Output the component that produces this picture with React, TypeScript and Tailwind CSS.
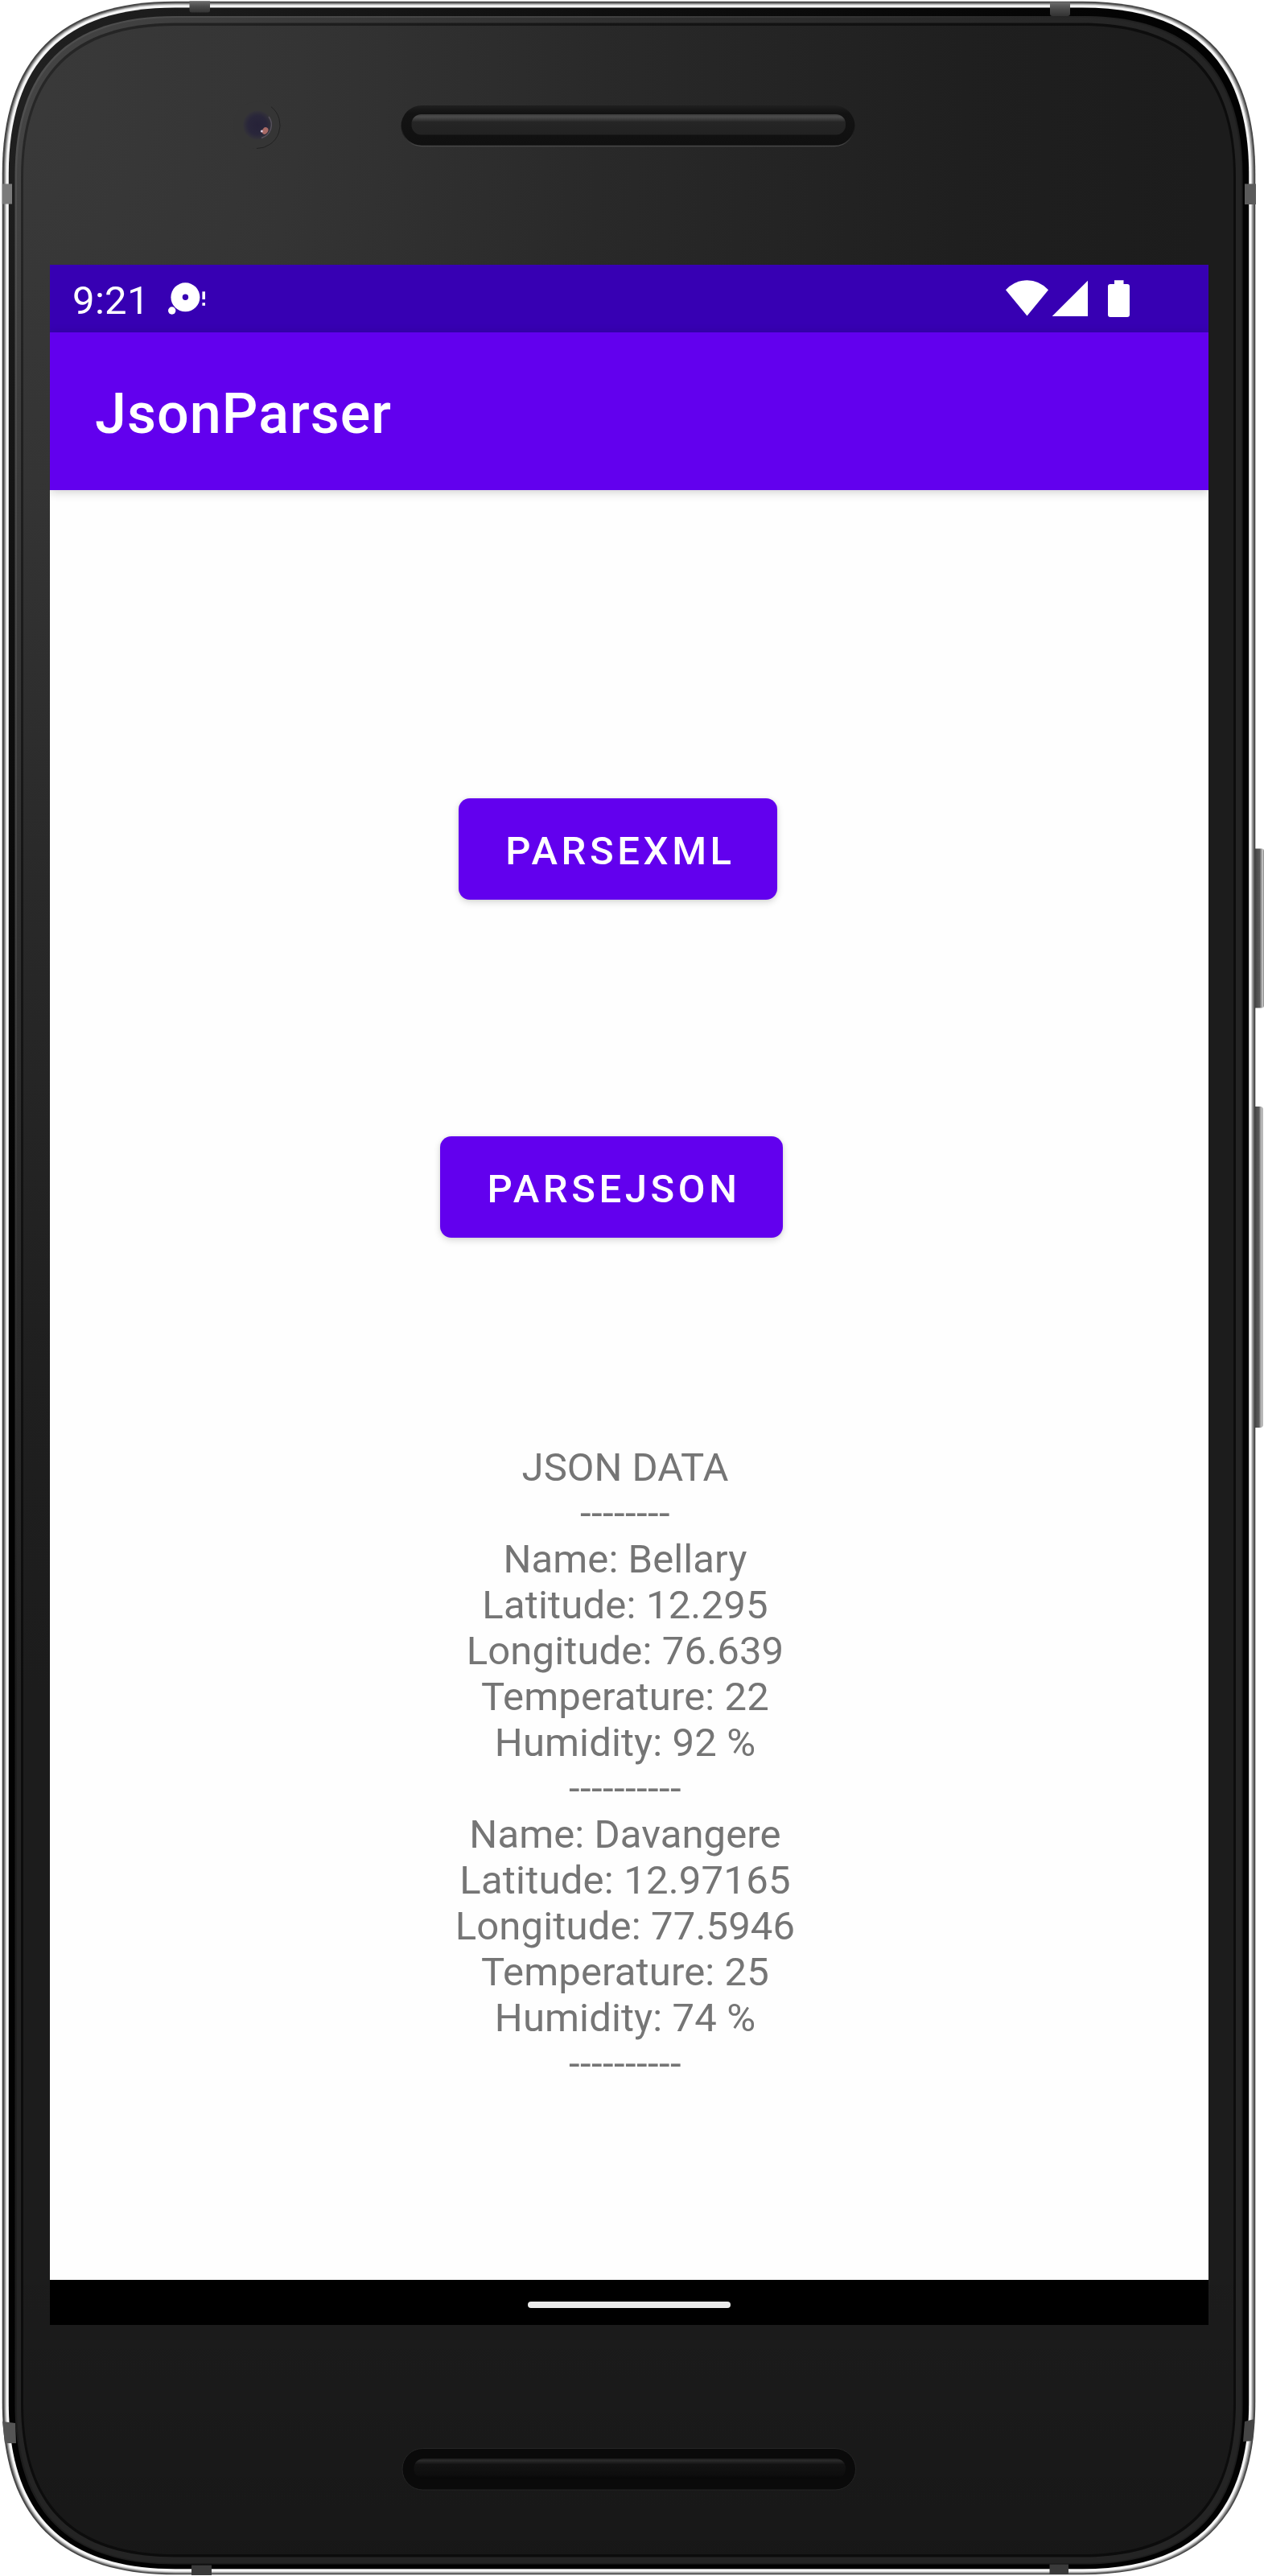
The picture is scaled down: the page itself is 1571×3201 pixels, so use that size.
import React from "react";

const KAPPA = 0.67;

/** Closed outline with soft, squarish corners. */
function outline(l: number, t: number, r: number, b: number, a: number) {
  const c = a * (1 - KAPPA);
  return [
    `M${l} ${t + a}`,
    `C${l} ${t + c} ${l + c} ${t} ${l + a} ${t}`,
    `H${r - a}`,
    `C${r - c} ${t} ${r} ${t + c} ${r} ${t + a}`,
    `V${b - a}`,
    `C${r} ${b - c} ${r - c} ${b} ${r - a} ${b}`,
    `H${l + a}`,
    `C${l + c} ${b} ${l} ${b - c} ${l} ${b - a}`,
    "Z",
  ].join("");
}

const rings = [
  { d: outline(2.7, 1.7, 1560.3, 3199.3, 215), fill: "#454545" },
  { d: outline(4.7, 3.4, 1558.6, 3198, 213), fill: "#6f6f6f" },
  { d: outline(5.8, 4.4, 1557.4, 3197.2, 212), fill: "#a0a0a0" },
  { d: outline(6.9, 5.6, 1556, 3196.2, 211), fill: "#d2d2d2" },
  { d: outline(8, 6.4, 1555, 3195.2, 210), fill: "#f6f6f6" },
  { d: outline(10.8, 9.4, 1552.2, 3192.2, 207), fill: "url(#rim)" },
  { d: outline(18.5, 20, 1544.5, 3186.5, 199), fill: "url(#bevelHi)" },
  { d: outline(21, 22, 1542.5, 3185, 197), fill: "url(#bevel)" },
  { d: outline(26, 28.5, 1536, 3177.5, 192), fill: "url(#groove)" },
  { d: outline(29, 32, 1533, 3174, 189), fill: "url(#face)" },
];

function PhoneCase() {
  return (
    <svg
      className="absolute inset-0 block"
      width="1571"
      height="3201"
      viewBox="0 0 1571 3201"
      aria-hidden="true"
    >
      <defs>
        <radialGradient id="face" gradientUnits="userSpaceOnUse" cx="0" cy="0" r="1" gradientTransform="translate(0 100) scale(1500 2000)">
          <stop offset="0" stopColor="#3a3a3a" />
          <stop offset="0.25" stopColor="#343434" />
          <stop offset="0.5" stopColor="#292929" />
          <stop offset="0.8" stopColor="#1f1f1f" />
          <stop offset="1" stopColor="#1c1c1c" />
        </radialGradient>
        <radialGradient id="bevel" gradientUnits="userSpaceOnUse" cx="0" cy="0" r="1" gradientTransform="translate(0 100) scale(1500 2000)">
          <stop offset="0" stopColor="#454545" />
          <stop offset="0.5" stopColor="#303030" />
          <stop offset="1" stopColor="#242424" />
        </radialGradient>
        <radialGradient id="bevelHi" gradientUnits="userSpaceOnUse" cx="0" cy="0" r="1" gradientTransform="translate(0 100) scale(1500 2000)">
          <stop offset="0" stopColor="#505050" />
          <stop offset="0.5" stopColor="#414141" />
          <stop offset="1" stopColor="#1d1d1d" />
        </radialGradient>
        <radialGradient id="groove" gradientUnits="userSpaceOnUse" cx="0" cy="0" r="1" gradientTransform="translate(0 100) scale(1500 2000)">
          <stop offset="0" stopColor="#282828" />
          <stop offset="0.5" stopColor="#151515" />
          <stop offset="1" stopColor="#0c0c0c" />
        </radialGradient>
        <radialGradient id="rim" gradientUnits="userSpaceOnUse" cx="0" cy="0" r="1" gradientTransform="translate(0 100) scale(1500 1400)">
          <stop offset="0" stopColor="#212121" />
          <stop offset="0.5" stopColor="#0f0f0f" />
          <stop offset="1" stopColor="#020202" />
        </radialGradient>
        <linearGradient id="shade" x1="0" y1="2800" x2="0" y2="3200" gradientUnits="userSpaceOnUse">
          <stop offset="0" stopColor="#000" stopOpacity="0" />
          <stop offset="1" stopColor="#000" stopOpacity="0.18" />
        </linearGradient>
        <linearGradient id="key" x1="0" y1="0" x2="1" y2="0">
          <stop offset="0" stopColor="#333" />
          <stop offset="0.35" stopColor="#4a4a4a" />
          <stop offset="0.65" stopColor="#5a5a5a" />
          <stop offset="0.78" stopColor="#9a9a9a" />
          <stop offset="0.9" stopColor="#cacaca" />
          <stop offset="1" stopColor="#777" />
        </linearGradient>
        <linearGradient id="bar" x1="0" y1="0" x2="0" y2="1">
          <stop offset="0" stopColor="#3c3c3c" />
          <stop offset="0.12" stopColor="#4b4b4b" />
          <stop offset="0.28" stopColor="#353535" />
          <stop offset="0.38" stopColor="#252525" />
          <stop offset="1" stopColor="#222" />
        </linearGradient>
        <linearGradient id="barLow" x1="0" y1="0" x2="0" y2="1">
          <stop offset="0" stopColor="#1c1c1c" />
          <stop offset="0.1" stopColor="#2a2a2a" />
          <stop offset="0.3" stopColor="#121212" />
          <stop offset="0.8" stopColor="#0e0e0e" />
          <stop offset="1" stopColor="#080808" />
        </linearGradient>
        <linearGradient id="band" x1="0" y1="0" x2="0" y2="1">
          <stop offset="0" stopColor="#6c6c6c" />
          <stop offset="0.5" stopColor="#4a4a4a" />
          <stop offset="1" stopColor="#333" />
        </linearGradient>
        <linearGradient id="slot" x1="0" y1="0" x2="0" y2="1">
          <stop offset="0" stopColor="#1f1f1f" />
          <stop offset="0.18" stopColor="#131313" />
          <stop offset="1" stopColor="#101010" />
        </linearGradient>
        <linearGradient id="slotEdge" x1="0" y1="0" x2="0" y2="1">
          <stop offset="0.5" stopColor="#222" stopOpacity="0" />
          <stop offset="1" stopColor="#484848" />
        </linearGradient>
        <radialGradient id="lens">
          <stop offset="0" stopColor="#262238" />
          <stop offset="0.65" stopColor="#29263a" />
          <stop offset="1" stopColor="#343338" />
        </radialGradient>
      </defs>

      <rect x="1556" y="1054.5" width="15" height="198" rx="3" fill="url(#key)" />
      <rect x="1556" y="1375" width="13.5" height="399" rx="3" fill="url(#key)" />

      {rings.map((ring, i) => (
        <path key={i} d={ring.d} fill={ring.fill} />
      ))}
      <path d={rings[9].d} fill="url(#shade)" />

      {/* antenna bands */}
      <path d="M235.5 1.3H261V13q0 2.500-3 2.500H238.500q-3 0-3-2.500Z" fill="url(#band)" />
      <path d="M1305 2.500H1330V17q0 3-3 3h-19q-3 0-3-3Z" fill="url(#band)" />
      <path d="M2.700 228.500H15V253.500H2.700Z" fill="#7b7b7b" />
      <path d="M1547 228.500H1561V254H1547Z" fill="#5a5a5a" />
      <path d="M3 3009L19 3011L20 3036H6Z" fill="#555" />
      <path d="M1547 3009L1559 3006L1557 3033L1545 3034Z" fill="#454545" />
      <path d="M238 3187.500H263V3200H238Z" fill="#3a3a3a" />
      <path d="M1304.500 3186.500H1328V3199H1304.500Z" fill="#3a3a3a" />

      {/* front camera */}
      <circle cx="319" cy="155.500" r="29" fill="#353535" />
      <path d="M337 132.700A29 29 0 0 1 319 184.500" fill="none" stroke="#222" strokeWidth="1" />
      <circle cx="320" cy="155.500" r="18" fill="url(#lens)" />
      <path d="M334 145A17 17 0 0 1 325 171.500" fill="none" stroke="#55505a" strokeWidth="1.500" />
      <ellipse cx="329.500" cy="162.500" rx="3.500" ry="4.500" fill="#a86a66" transform="rotate(35 329.500 162.500)" />
      <circle cx="325.300" cy="163" r="1.500" fill="#d9c9dc" />

      {/* earpiece */}
      <rect x="498.500" y="131" width="564" height="51" rx="25.500" fill="url(#slot)" />
      <rect x="499" y="131.500" width="563" height="50" rx="25" fill="none" stroke="url(#slotEdge)" strokeWidth="1.300" />
      <rect x="511.500" y="142" width="539.500" height="25.500" rx="12" fill="url(#bar)" />

      {/* bottom speaker */}
      <rect x="500" y="3042.500" width="563.500" height="51.500" rx="25.500" fill="#0a0a0a" />
      <rect x="500" y="3042.500" width="563.500" height="51.500" rx="25.500" fill="none" stroke="#242424" strokeWidth="1" />
      <rect x="514.500" y="3055" width="536.500" height="25" rx="12" fill="url(#barLow)" />
    </svg>
  );
}

function DebugIcon() {
  return (
    <svg className="mb-[2px] ml-[22px] block" width="48" height="44" viewBox="207 348 48 44" fill="#fff">
      <circle cx="229.400" cy="369.300" r="18" />
      <circle cx="229.400" cy="369.300" r="3.700" fill="#3700b3" />
      <circle cx="212.700" cy="386" r="4.700" />
      <rect x="250.400" y="362.300" width="3.600" height="9.700" />
      <rect x="250.400" y="376.200" width="3.600" height="3.600" />
    </svg>
  );
}

function SystemIcons() {
  return (
    <svg className="mr-[98px] block" width="154" height="48" viewBox="1250 347 154 48" fill="#fff">
      <path d="M1276.500 392.400L1250 360.200Q1261.500 348.300 1276.500 348.300T1303 360.200Z" />
      <path d="M1352 348.700V393H1307.700Z" />
      <path d="M1385 348.300H1396.500V353H1401q3 0 3 3V391q0 3-3 3H1380q-3 0-3-3V356q0-3 3-3H1385Z" />
    </svg>
  );
}

function ContainedButton({ label, className }: { label: string; className: string }) {
  return (
    <button
      type="button"
      className={`flex h-[126px] shrink-0 items-center justify-center rounded-[14px] bg-[#6200ee] pt-[5px] pl-[6px] text-[49px] leading-[57px] font-medium tracking-[4.6px] text-white shadow-[0_3px_8px_rgba(0,0,0,0.16),0_0_4px_rgba(0,0,0,0.06)] ${className}`}
    >
      {label}
    </button>
  );
}

const lines = [
  { text: "JSON DATA", tracking: "tracking-[0px]" },
  { text: "--------", tracking: "tracking-[0.48px]" },
  { text: "Name: Bellary", tracking: "tracking-[0.1px]" },
  { text: "Latitude: 12.295", tracking: "tracking-[0.19px]" },
  { text: "Longitude: 76.639", tracking: "tracking-[0.14px]" },
  { text: "Temperature: 22", tracking: "tracking-[0.13px]" },
  { text: "Humidity: 92 %", tracking: "tracking-[0.11px]" },
  { text: "----------", tracking: "tracking-[0.48px]" },
  { text: "Name: Davangere", tracking: "tracking-[0.1px]" },
  { text: "Latitude: 12.97165", tracking: "tracking-[0.22px]" },
  { text: "Longitude: 77.5946", tracking: "tracking-[0.16px]" },
  { text: "Temperature: 25", tracking: "tracking-[0.13px]" },
  { text: "Humidity: 74 %", tracking: "tracking-[0.11px]" },
  { text: "----------", tracking: "tracking-[0.48px]" },
];

export default function App() {
  return (
    <div className="relative h-[3201px] w-[1571px] overflow-hidden bg-white pt-[329px] pl-[62px] font-[Roboto,sans-serif]">
      <PhoneCase />
      <div className="relative flex h-[2560px] w-[1440px] flex-col overflow-hidden bg-[#fefefe]">
        <div className="flex h-[84px] shrink-0 items-center justify-between bg-[#3700b3]">
          <div className="flex items-center pl-[28px]">
            <span className="pt-[5px] text-[49px] leading-[57px] tracking-[0.35px] text-white">9:21</span>
            <DebugIcon />
          </div>
          <SystemIcons />
        </div>

        <header className="relative flex h-[196px] shrink-0 items-center bg-[#6200ee] pt-[6px] pl-[56px] shadow-[0_2px_12px_rgba(0,0,0,0.2)]">
          <h1 className="text-[70px] leading-[82px] font-medium tracking-[1.05px] text-white">JsonParser</h1>
        </header>

        <main className="flex flex-1 flex-col">
          <ContainedButton label="PARSEXML" className="mt-[383px] ml-[508px] w-[396px]" />
          <ContainedButton label="PARSEJSON" className="mt-[294px] ml-[485px] w-[426px]" />
          <div className="mt-[257px] flex flex-col items-center pr-[10px] text-center text-[49px] leading-[57px] text-[#757575]">
            {lines.map((line, i) => (
              <p key={i} className={`whitespace-pre ${line.tracking}`}>
                {line.text}
              </p>
            ))}
          </div>
        </main>

        <nav className="flex h-[56px] shrink-0 items-center justify-center bg-black pt-[6px]">
          <div className="h-[8px] w-[252px] rounded-full bg-[#ebebeb]" />
        </nav>
      </div>
    </div>
  );
}
